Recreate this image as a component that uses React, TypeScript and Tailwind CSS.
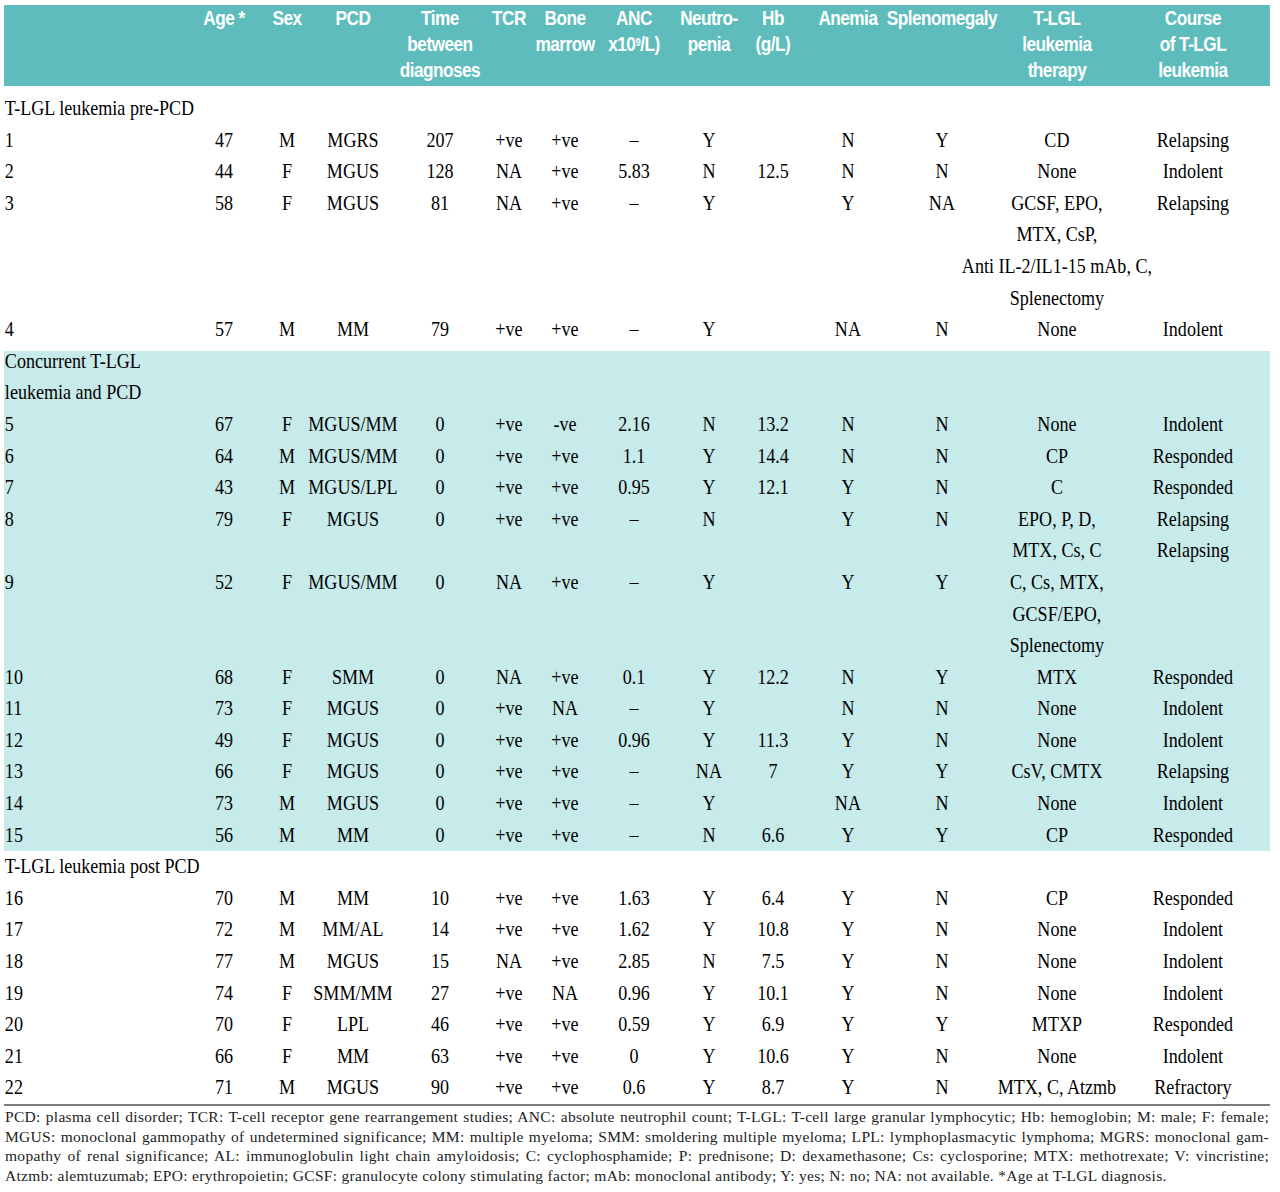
import React from 'react'

type Row = {
    id: string
    cells: string[]
    therapy: string[]
    course: string[]
}

// id, age, sex, pcd, time, tcr, bone, anc, neutro, hb, anemia, spleno
const r = (id: string, cells: string[], therapy: string[], course: string[]): Row => ({ id, cells, therapy, course })

const preRows: Row[] = [
    r('1', ['47', 'M', 'MGRS', '207', '+ve', '+ve', '–', 'Y', '', 'N', 'Y'], ['CD'], ['Relapsing']),
    r('2', ['44', 'F', 'MGUS', '128', 'NA', '+ve', '5.83', 'N', '12.5', 'N', 'N'], ['None'], ['Indolent']),
    r('3', ['58', 'F', 'MGUS', '81', 'NA', '+ve', '–', 'Y', '', 'Y', 'NA'],
        ['GCSF, EPO,', 'MTX, CsP,', 'Anti IL-2/IL1-15 mAb, C,', 'Splenectomy'], ['Relapsing']),
    r('4', ['57', 'M', 'MM', '79', '+ve', '+ve', '–', 'Y', '', 'NA', 'N'], ['None'], ['Indolent']),
]

const concurrentRows: Row[] = [
    r('5', ['67', 'F', 'MGUS/MM', '0', '+ve', '-ve', '2.16', 'N', '13.2', 'N', 'N'], ['None'], ['Indolent']),
    r('6', ['64', 'M', 'MGUS/MM', '0', '+ve', '+ve', '1.1', 'Y', '14.4', 'N', 'N'], ['CP'], ['Responded']),
    r('7', ['43', 'M', 'MGUS/LPL', '0', '+ve', '+ve', '0.95', 'Y', '12.1', 'Y', 'N'], ['C'], ['Responded']),
    r('8', ['79', 'F', 'MGUS', '0', '+ve', '+ve', '–', 'N', '', 'Y', 'N'], ['EPO, P, D,', 'MTX, Cs, C'], ['Relapsing', 'Relapsing']),
    r('9', ['52', 'F', 'MGUS/MM', '0', 'NA', '+ve', '–', 'Y', '', 'Y', 'Y'], ['C, Cs, MTX,', 'GCSF/EPO,', 'Splenectomy'], []),
    r('10', ['68', 'F', 'SMM', '0', 'NA', '+ve', '0.1', 'Y', '12.2', 'N', 'Y'], ['MTX'], ['Responded']),
    r('11', ['73', 'F', 'MGUS', '0', '+ve', 'NA', '–', 'Y', '', 'N', 'N'], ['None'], ['Indolent']),
    r('12', ['49', 'F', 'MGUS', '0', '+ve', '+ve', '0.96', 'Y', '11.3', 'Y', 'N'], ['None'], ['Indolent']),
    r('13', ['66', 'F', 'MGUS', '0', '+ve', '+ve', '–', 'NA', '7', 'Y', 'Y'], ['CsV, CMTX'], ['Relapsing']),
    r('14', ['73', 'M', 'MGUS', '0', '+ve', '+ve', '–', 'Y', '', 'NA', 'N'], ['None'], ['Indolent']),
    r('15', ['56', 'M', 'MM', '0', '+ve', '+ve', '–', 'N', '6.6', 'Y', 'Y'], ['CP'], ['Responded']),
]

const postRows: Row[] = [
    r('16', ['70', 'M', 'MM', '10', '+ve', '+ve', '1.63', 'Y', '6.4', 'Y', 'N'], ['CP'], ['Responded']),
    r('17', ['72', 'M', 'MM/AL', '14', '+ve', '+ve', '1.62', 'Y', '10.8', 'Y', 'N'], ['None'], ['Indolent']),
    r('18', ['77', 'M', 'MGUS', '15', 'NA', '+ve', '2.85', 'N', '7.5', 'Y', 'N'], ['None'], ['Indolent']),
    r('19', ['74', 'F', 'SMM/MM', '27', '+ve', 'NA', '0.96', 'Y', '10.1', 'Y', 'N'], ['None'], ['Indolent']),
    r('20', ['70', 'F', 'LPL', '46', '+ve', '+ve', '0.59', 'Y', '6.9', 'Y', 'Y'], ['MTXP'], ['Responded']),
    r('21', ['66', 'F', 'MM', '63', '+ve', '+ve', '0', 'Y', '10.6', 'Y', 'N'], ['None'], ['Indolent']),
    r('22', ['71', 'M', 'MGUS', '90', '+ve', '+ve', '0.6', 'Y', '8.7', 'Y', 'N'], ['MTX, C, Atzmb'], ['Refractory']),
]

const footnotes = [
    'PCD: plasma cell disorder; TCR: T-cell receptor gene rearrangement studies; ANC: absolute neutrophil count; T-LGL: T-cell large granular lymphocytic; Hb: hemoglobin; M: male; F: female;',
    'MGUS: monoclonal gammopathy of undetermined significance; MM: multiple myeloma; SMM: smoldering multiple myeloma; LPL: lymphoplasmacytic lymphoma; MGRS: monoclonal gam-',
    'mopathy of renal significance; AL: immunoglobulin light chain amyloidosis; C: cyclophosphamide; P: prednisone; D: dexamethasone; Cs: cyclosporine; MTX: methotrexate; V: vincristine;',
]

// column grid, laid out before the horizontal condense (scale-x 0.86)
const cols =
    'grid grid-cols-[218.6px_74.4px_72.1px_81.4px_120.9px_39.6px_90.7px_69.7px_104.7px_44.2px_130.2px_88.4px_179.1px_137.2px_20.9px]'

function Cell({ lines }: { lines: React.ReactNode[] }) {
    return (
        <div className="flex flex-col items-center whitespace-nowrap">
            {lines.map((l, i) => (
                <div key={i}>{l}</div>
            ))}
        </div>
    )
}

function DataRow({ row }: { row: Row }) {
    return (
        <div className={cols}>
            <div className="pl-[1px]">{row.id}</div>
            {row.cells.map((c, i) => (
                <Cell key={i} lines={[c]} />
            ))}
            <Cell lines={row.therapy} />
            <Cell lines={row.course} />
            <div />
        </div>
    )
}

function SectionLabel({ children }: { children: React.ReactNode }) {
    return <div className="pl-[1px] whitespace-nowrap">{children}</div>
}

export default function App() {
    return (
        <div className="w-[1280px] h-[1192px] bg-white overflow-hidden pt-[5px] text-black">
            <div className="ml-[4px] w-[1472.1px] origin-top-left scale-x-[0.86]">
                <div
                    className={`${cols} bg-[#5ebdbc] pb-[3px] text-white font-bold font-['Liberation_Sans',sans-serif] text-[20px] leading-[26px] tracking-[-0.6px]`}
                >
                    <div />
                    <Cell lines={['Age *']} />
                    <Cell lines={['Sex']} />
                    <Cell lines={['PCD']} />
                    <Cell lines={['Time', 'between', 'diagnoses']} />
                    <Cell lines={['TCR']} />
                    <Cell lines={['Bone', 'marrow']} />
                    <Cell lines={['ANC', <>x10<sup className="text-[11px]">9</sup>/L)</>]} />
                    <Cell lines={['Neutro-', 'penia']} />
                    <Cell lines={['Hb', '(g/L)']} />
                    <Cell lines={['Anemia']} />
                    <Cell lines={['Splenomegaly']} />
                    <Cell lines={['T-LGL', 'leukemia', 'therapy']} />
                    <Cell lines={['Course', 'of T-LGL', 'leukemia']} />
                    <div />
                </div>

                <div className="pt-[7px] font-['Liberation_Serif',serif] text-[21px] leading-[31.6px]">
                    <SectionLabel>T-LGL leukemia pre-PCD</SectionLabel>
                    {preRows.map((row) => (
                        <DataRow key={row.id} row={row} />
                    ))}

                    <div className="bg-[linear-gradient(to_bottom,#ffffff_5px,#c7eaea_5px)]">
                        <SectionLabel>
                            Concurrent T-LGL
                            <br />
                            leukemia and PCD
                        </SectionLabel>
                        {concurrentRows.map((row) => (
                            <DataRow key={row.id} row={row} />
                        ))}
                    </div>

                    <SectionLabel>T-LGL leukemia post PCD</SectionLabel>
                    {postRows.map((row) => (
                        <DataRow key={row.id} row={row} />
                    ))}
                </div>
            </div>

            <div className="ml-[4px] w-[1266px] h-[2px] bg-[#7b7b7b]" />
            <div className="ml-[5px] w-[1264px] mt-[1px] font-['Liberation_Serif',serif] text-[15.5px] leading-[19.7px] text-[#222222] tracking-[0.3px]">
                {footnotes.map((f, i) => (
                    <div key={i} className="whitespace-nowrap text-justify [text-align-last:justify]">
                        {f}
                    </div>
                ))}
                <div className="whitespace-nowrap">
                    Atzmb: alemtuzumab; EPO: erythropoietin; GCSF: granulocyte colony stimulating factor; mAb: monoclonal antibody; Y: yes; N: no; NA: not available. *Age at T-LGL diagnosis.
                </div>
            </div>
        </div>
    )
}
